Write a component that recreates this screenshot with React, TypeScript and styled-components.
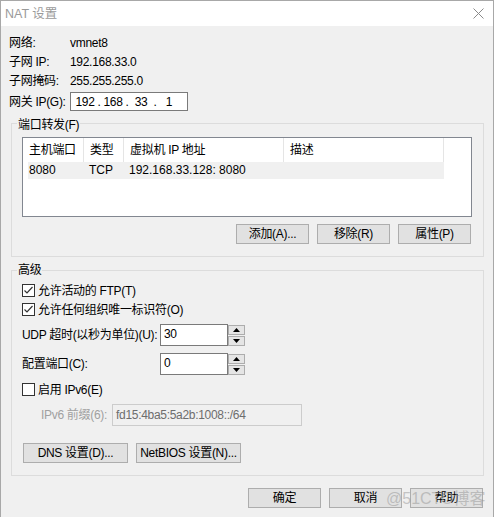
import React from "react";
import styled, { createGlobalStyle } from "styled-components";

const GlobalStyle = createGlobalStyle`
  * { box-sizing: border-box; }
  html, body { margin: 0; padding: 0; background: #ffffff; }
  body {
    font-family: "Liberation Sans", "Noto Sans CJK SC", sans-serif;
    font-size: 12px;
    letter-spacing: -0.3px;
    color: #000;
    white-space: nowrap;
  }
`;

const Window = styled.div`
  position: relative;
  width: 494px;
  height: 517px;
  background: #f0f0f0;
  border: 1px solid #a8a8a8;
  border-bottom: none;
  display: flex;
  flex-direction: column;
  overflow: hidden;
`;

const TitleBar = styled.div`
  height: 25px;
  flex-shrink: 0;
  background: #ffffff;
  display: flex;
  align-items: center;
  justify-content: space-between;
  padding: 0 9px 0 4px;
`;

const Title = styled.span`
  color: #9a9a9a;
  font-size: 12.5px;
  letter-spacing: 0;
  line-height: 16px;
`;

const Body = styled.div`
  flex: 1;
  display: flex;
  flex-direction: column;
  padding: 0 9px 0 10px;
`;

const InfoGrid = styled.div`
  display: grid;
  grid-template-columns: 61px auto;
  grid-auto-rows: 19px;
  align-items: center;
  margin: 7px 0 0 -2px;
  line-height: 16px;
`;

const GatewayRow = styled.div`
  display: grid;
  grid-template-columns: 61px auto;
  align-items: center;
  height: 19px;
  margin: 2px 0 0 -2px;
  line-height: 16px;
`;

const IpBox = styled.div`
  width: 118px;
  height: 19px;
  border: 1px solid #7a7a7a;
  background: #ffffff;
  display: flex;
  align-items: center;
  padding-left: 2px;
`;

const IpPart = styled.span`
  width: 24px;
  text-align: center;
`;

const IpDot = styled.span`
  width: 4px;
  text-align: center;
`;

const GroupBox = styled.div<{ $mt: number; $pad: string }>`
  position: relative;
  border: 1px solid #dcdcdc;
  margin-top: ${(p) => p.$mt}px;
  padding: ${(p) => p.$pad};
`;

const GroupTitle = styled.span<{ $top: number }>`
  position: absolute;
  top: ${(p) => p.$top}px;
  left: 5px;
  padding: 0 1px;
  background: #f0f0f0;
  line-height: 16px;
`;

const ListView = styled.div`
  height: 80px;
  border: 1px solid #828790;
  background: #ffffff;
`;

const ListHeader = styled.div`
  display: grid;
  grid-template-columns: 61px 40px 160px 160px;
  height: 24px;
`;

const HeaderCell = styled.div`
  border-right: 1px solid #e5e5e5;
  padding-left: 6px;
  line-height: 24px;
`;

const ListRow = styled.div`
  display: grid;
  grid-template-columns: 61px 40px 160px 160px;
  height: 17px;
`;

const RowCell = styled.div<{ $first?: boolean }>`
  background: #f0f0f0;
  margin-left: ${(p) => (p.$first ? 5 : 0)}px;
  padding-left: ${(p) => (p.$first ? 1 : 5)}px;
  line-height: 17px;
  letter-spacing: 0;
`;

const ButtonRow = styled.div<{ $mt: number; $justify: string; $pl?: number; $pr?: number }>`
  display: flex;
  justify-content: ${(p) => p.$justify};
  gap: 8px;
  margin-top: ${(p) => p.$mt}px;
  padding-left: ${(p) => p.$pl ?? 0}px;
  padding-right: ${(p) => p.$pr ?? 0}px;
`;

const Btn = styled.button<{ $w: number }>`
  width: ${(p) => p.$w}px;
  height: 20px;
  background: #e1e1e1;
  border: 1px solid #adadad;
  border-radius: 0;
  font: inherit;
  letter-spacing: inherit;
  color: #000;
  padding: 0;
  line-height: 18px;
  cursor: default;
`;

const CheckRow = styled.label<{ $mt?: number }>`
  display: flex;
  align-items: center;
  gap: 3px;
  height: 19px;
  margin-top: ${(p) => p.$mt ?? 0}px;
  line-height: 16px;
`;

const CheckBox = styled.span`
  width: 13px;
  height: 13px;
  border: 1px solid #333333;
  background: #ffffff;
  display: flex;
  align-items: center;
  justify-content: center;
`;

const SpinRow = styled.div<{ $mt: number }>`
  display: flex;
  align-items: center;
  height: 22px;
  margin-top: ${(p) => p.$mt}px;
  line-height: 16px;
`;

const SpinLabel = styled.span`
  width: 138px;
  flex-shrink: 0;
`;

const SpinField = styled.div`
  width: 68px;
  height: 22px;
  border: 1px solid #7a7a7a;
  background: #ffffff;
  padding-left: 3px;
  line-height: 18px;
`;

const SpinButtons = styled.div`
  width: 17px;
  height: 22px;
  display: flex;
  flex-direction: column;
  gap: 1px;
  padding-top: 1px;
`;

const SpinBtn = styled.div`
  height: 10px;
  border: 1px solid #adadad;
  background: #e5e5e5;
  display: flex;
  align-items: center;
  justify-content: center;
`;

const PrefixRow = styled.div`
  display: flex;
  align-items: center;
  height: 22px;
  margin-top: 5px;
  padding-left: 19px;
  line-height: 16px;
`;

const PrefixLabel = styled.span`
  width: 71px;
  color: #a0a0a0;
`;

const PrefixInput = styled.div`
  width: 190px;
  height: 22px;
  border: 1px solid #cccccc;
  background: #f0f0f0;
  color: #6d6d6d;
  padding-left: 3px;
  line-height: 20px;
`;

const Watermark = styled.span`
  position: absolute;
  left: 385px;
  top: 490px;
  font-size: 16px;
  line-height: 16px;
  letter-spacing: 0;
  color: rgba(150, 150, 150, 0.5);
  pointer-events: none;
`;

const CloseIcon = () => (
  <svg width="11" height="11" viewBox="0 0 11 11">
    <path d="M0.5 0.5 L10.5 10.5 M10.5 0.5 L0.5 10.5" stroke="#8a8a8a" strokeWidth="1" fill="none" />
  </svg>
);

const CheckMark = () => (
  <svg width="11" height="11" viewBox="0 0 11 11">
    <path d="M1.5 5.5 L4 8 L9.5 2" stroke="#333" strokeWidth="1.2" fill="none" />
  </svg>
);

const Arrow = ({ up }: { up: boolean }) => (
  <svg width="7" height="4" viewBox="0 0 7 4">
    <path d={up ? "M0 4 L3.5 0 L7 4 Z" : "M0 0 L3.5 4 L7 0 Z"} fill="#000" />
  </svg>
);

const Check = ({ checked, label, mt }: { checked: boolean; label: string; mt?: number }) => (
  <CheckRow $mt={mt}>
    <CheckBox>{checked && <CheckMark />}</CheckBox>
    <span>{label}</span>
  </CheckRow>
);

const Spinner = ({ label, value, mt }: { label: string; value: string; mt: number }) => (
  <SpinRow $mt={mt}>
    <SpinLabel>{label}</SpinLabel>
    <SpinField>{value}</SpinField>
    <SpinButtons>
      <SpinBtn>
        <Arrow up />
      </SpinBtn>
      <SpinBtn>
        <Arrow up={false} />
      </SpinBtn>
    </SpinButtons>
  </SpinRow>
);

export default function App() {
  return (
    <>
      <GlobalStyle />
      <Window>
        <TitleBar>
          <Title>NAT 设置</Title>
          <CloseIcon />
        </TitleBar>
        <Body>
          <InfoGrid>
            <span>网络:</span>
            <span>vmnet8</span>
            <span>子网 IP:</span>
            <span>192.168.33.0</span>
            <span>子网掩码:</span>
            <span>255.255.255.0</span>
          </InfoGrid>
          <GatewayRow>
            <span>网关 IP(G):</span>
            <IpBox>
              <IpPart>192</IpPart>
              <IpDot>.</IpDot>
              <IpPart>168</IpPart>
              <IpDot>.</IpDot>
              <IpPart>33</IpPart>
              <IpDot>.</IpDot>
              <IpPart>1</IpPart>
            </IpBox>
          </GatewayRow>

          <GroupBox $mt={12} $pad="13px 11px 12px 10px">
            <GroupTitle $top={-7}>端口转发(F)</GroupTitle>
            <ListView>
              <ListHeader>
                <HeaderCell>主机端口</HeaderCell>
                <HeaderCell>类型</HeaderCell>
                <HeaderCell>虚拟机 IP 地址</HeaderCell>
                <HeaderCell>描述</HeaderCell>
              </ListHeader>
              <ListRow>
                <RowCell $first>8080</RowCell>
                <RowCell>TCP</RowCell>
                <RowCell>192.168.33.128: 8080</RowCell>
                <RowCell></RowCell>
              </ListRow>
            </ListView>
            <ButtonRow $mt={7} $justify="flex-end" $pr={1}>
              <Btn $w={73}>添加(A)...</Btn>
              <Btn $w={73}>移除(R)</Btn>
              <Btn $w={73}>属性(P)</Btn>
            </ButtonRow>
          </GroupBox>

          <GroupBox $mt={13} $pad="10px 10px 12px 10px">
            <GroupTitle $top={-9}>高级</GroupTitle>
            <Check checked label="允许活动的 FTP(T)" />
            <Check checked label="允许任何组织唯一标识符(O)" />
            <Spinner label="UDP 超时(以秒为单位)(U):" value="30" mt={5} />
            <Spinner label="配置端口(C):" value="0" mt={7} />
            <Check checked={false} label="启用 IPv6(E)" mt={5} />
            <PrefixRow>
              <PrefixLabel>IPv6 前缀(6):</PrefixLabel>
              <PrefixInput>fd15:4ba5:5a2b:1008::/64</PrefixInput>
            </PrefixRow>
            <ButtonRow $mt={17} $justify="flex-start" $pl={1}>
              <Btn $w={105}>DNS 设置(D)...</Btn>
              <Btn $w={105}>NetBIOS 设置(N)...</Btn>
            </ButtonRow>
          </GroupBox>

          <ButtonRow $mt={12} $justify="flex-end" $pr={1}>
            <Btn $w={73}>确定</Btn>
            <Btn $w={73}>取消</Btn>
            <Btn $w={73}>帮助</Btn>
          </ButtonRow>
        </Body>
        <Watermark>@51CTO博客</Watermark>
      </Window>
    </>
  );
}
